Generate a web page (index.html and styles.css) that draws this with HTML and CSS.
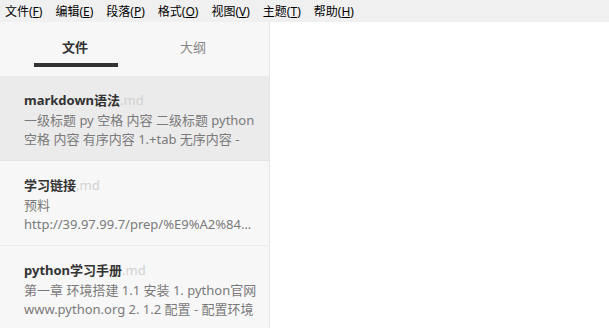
FILE: index.html
```html
<!DOCTYPE html>
<html lang="zh-CN">
<head>
  <meta charset="UTF-8" />
  <title>Typora</title>
  <link rel="stylesheet" href="styles.css">
</head>
<body>
  <div class="menubar">
    <span class="menu">文件(<u>F</u>)</span>
    <span class="menu">编辑(<u>E</u>)</span>
    <span class="menu">段落(<u>P</u>)</span>
    <span class="menu">格式(<u>O</u>)</span>
    <span class="menu">视图(<u>V</u>)</span>
    <span class="menu">主题(<u>T</u>)</span>
    <span class="menu">帮助(<u>H</u>)</span>
  </div>
  <div class="main">
    <div class="sidebar">
      <div class="tabs">
        <div class="tab active">文件</div>
        <div class="tab">大纲</div>
      </div>
      <div class="files">
        <div class="file selected">
          <div class="file-title">markdown语法<span class="ext">.md</span></div>
          <div class="file-preview">一级标题 py 空格 内容 二级标题 python 空格 内容 有序内容 1.+tab 无序内容 -</div>
        </div>
        <div class="file">
          <div class="file-title">学习链接<span class="ext">.md</span></div>
          <div class="file-preview">预料 <span class="link">http://39.97.99.7/prep/%E9%A2%84%E6%96%99/%E5%AD%A6%E4%B9%A0</span></div>
        </div>
        <div class="file">
          <div class="file-title">python学习手册<span class="ext">.md</span></div>
          <div class="file-preview">第一章 环境搭建 1.1 安装 1. python官网 www.python.org 2. 1.2 配置 - 配置环境变量</div>
        </div>
      </div>
    </div>
    <div class="editor"></div>
  </div>
</body>
</html>
```
FILE: styles.css
```css
* {
  box-sizing: border-box;
}
body {
  margin: 0;
  font-family: "Noto Sans", "Noto Sans CJK SC", sans-serif;
  background: #ffffff;
  color: #333;
  height: 328px;
  overflow: hidden;
}
.menubar {
  height: 22px;
  background: #f0f0f0;
  display: flex;
  align-items: center;
  padding-left: 5px;
  gap: 13px;
  font-size: 12px;
  color: #000;
}
.menu u {
  text-decoration-thickness: 1px;
  text-underline-offset: 1px;
}
.main {
  display: flex;
  height: 306px;
}
.sidebar {
  width: 270px;
  background: #f7f7f7;
  border-right: 1px solid #e6e6e6;
}
.tabs {
  display: flex;
  padding: 0 17px 0 16px;
  height: 54px;
}
.tab {
  flex: 1;
  text-align: center;
  font-size: 13px;
  color: #888;
  padding-top: 15px;
  line-height: 20px;
  position: relative;
}
.tab.active {
  color: #333;
  font-weight: bold;
}
.tab.active::after {
  content: "";
  position: absolute;
  left: 18px;
  right: 16px;
  top: 41px;
  height: 4px;
  background: #333;
}
.file {
  height: 85px;
  padding: 14px 8px 0 24px;
  border-bottom: 1px solid #ececec;
}
.file.selected {
  background: #ebebeb;
  border-bottom-color: #e4e4e4;
}
.file-title {
  font-size: 13px;
  font-weight: bold;
  color: #333;
  line-height: 20px;
}
.ext {
  font-weight: normal;
  color: #d2d2d2;
}
.file-preview {
  font-size: 13px;
  color: #7a7a7a;
  line-height: 19px;
  margin-top: 1px;
  max-height: 38px;
  overflow: hidden;
}
.link {
  display: block;
  width: 234px;
  white-space: nowrap;
  overflow: hidden;
  text-overflow: ellipsis;
}
.editor {
  flex: 1;
  background: #fff;
}
```
